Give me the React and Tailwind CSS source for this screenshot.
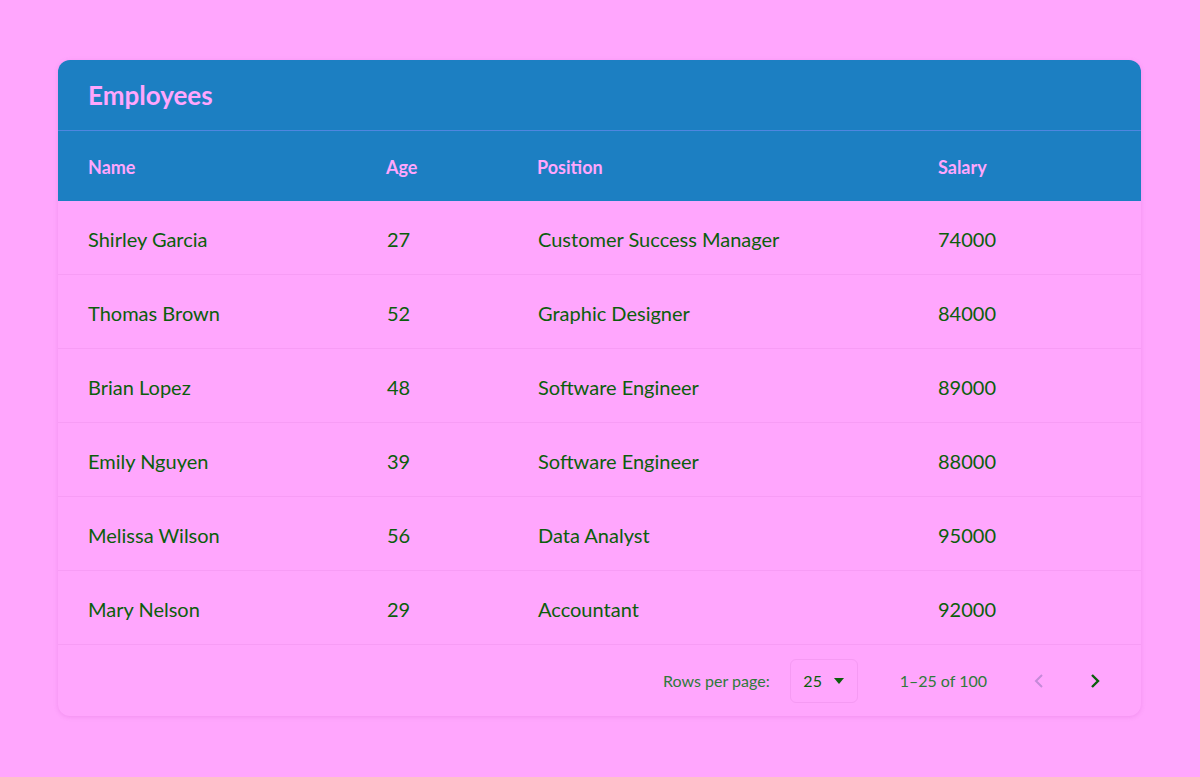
const rows = [
  ["Shirley Garcia", 27, "Customer Success Manager", 74000],
  ["Thomas Brown", 52, "Graphic Designer", 84000],
  ["Brian Lopez", 48, "Software Engineer", 89000],
  ["Emily Nguyen", 39, "Software Engineer", 88000],
  ["Melissa Wilson", 56, "Data Analyst", 95000],
  ["Mary Nelson", 29, "Accountant", 92000],
];

export default function App() {
  return (
    <div className="min-h-[777px] bg-[#ffa6fd] pt-[60px] px-[58px] font-[Lato,sans-serif]">
      <div className="w-[1083px] rounded-xl overflow-hidden shadow-[0_1px_4px_rgba(200,80,200,0.25)] bg-[#ffa6fd]">
        <div className="bg-[#1c7fc2]">
          <div className="h-[71px] flex items-center px-[30px] border-b border-[#4f86e0]">
            <h1 className="text-[26px] font-bold text-[#ffa6fd]">Employees</h1>
          </div>
          <div className="h-[70px] grid grid-cols-[298px_151px_401px_1fr] items-center px-[30px] pt-[2px] text-[18px] font-bold text-[#ffa6fd]">
            <div>Name</div>
            <div>Age</div>
            <div>Position</div>
            <div>Salary</div>
          </div>
        </div>
        {rows.map(([name, age, pos, sal]) => (
          <div
            key={name}
            className="h-[74px] grid grid-cols-[299px_151px_400px_1fr] items-center px-[30px] pt-[3px] text-[20px] text-[#0b5e0b] border-b border-[#f79cf5]"
          >
            <div>{name}</div>
            <div>{age}</div>
            <div>{pos}</div>
            <div>{sal}</div>
          </div>
        ))}
        <div className="h-[71px] flex items-center justify-end pr-[34px] text-[16px] text-[#2f7a3a]">
          <span>Rows per page:</span>
          <div className="ml-[20px] w-[68px] h-[44px] rounded-md border border-[#f59af3] flex items-center justify-center gap-3 text-[#0b5e0b] text-[16px]">
            25
            <svg width="10" height="6" viewBox="0 0 10 6"><path d="M0 0h10L5 6z" fill="#0b5e0b" /></svg>
          </div>
          <span className="ml-[42px]">1–25 of 100</span>
          <svg className="ml-[40px]" width="24" height="24" viewBox="0 0 24 24" fill="none" stroke="#c58ad8" strokeWidth="2"><path d="M15 6l-6 6 6 6" /></svg>
          <svg className="ml-[32px]" width="24" height="24" viewBox="0 0 24 24" fill="none" stroke="#0b5e0b" strokeWidth="2.4"><path d="M9 6l6 6-6 6" /></svg>
        </div>
      </div>
    </div>
  );
}
